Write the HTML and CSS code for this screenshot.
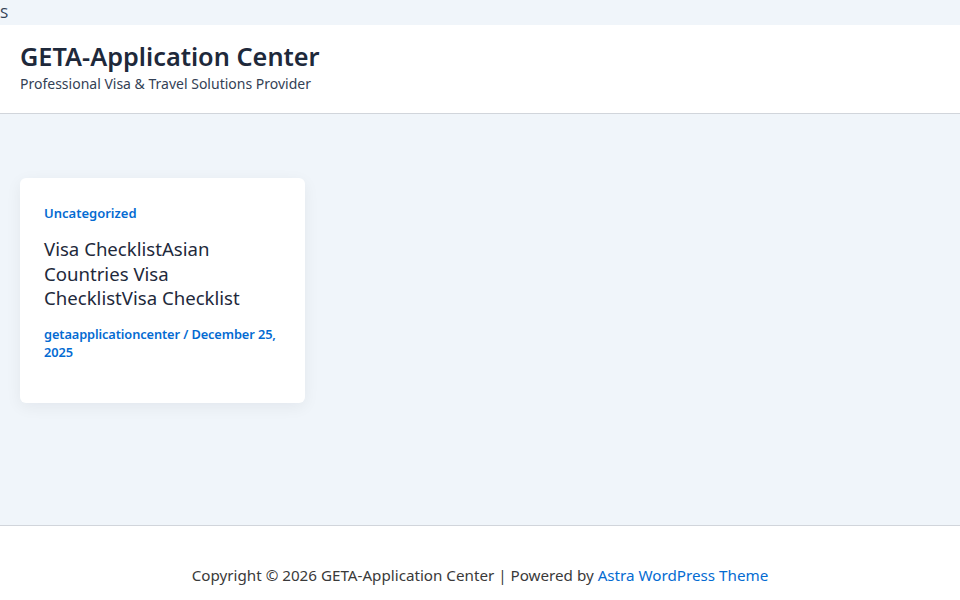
FILE: index.html
```html
<!DOCTYPE html>
<html lang="en">
<head>
<meta charset="utf-8">
<title>GETA-Application Center</title>
<link rel="stylesheet" href="styles.css">
</head>
<body>
<div class="skip">S</div>
<header class="site-header">
  <div class="site-title">GETA-Application Center</div>
  <div class="site-desc">Professional Visa &amp; Travel Solutions Provider</div>
</header>
<main class="content">
  <article class="card">
    <a class="cat" href="#">Uncategorized</a>
    <h2 class="post-title">Visa ChecklistAsian Countries Visa ChecklistVisa Checklist</h2>
    <div class="meta">getaapplicationcenter / December 25, 2025</div>
  </article>
</main>
<footer class="site-footer">
  <p>Copyright © 2026 GETA-Application Center | Powered by <a href="#">Astra WordPress Theme</a></p>
</footer>
</body>
</html>
```
FILE: styles.css
```css
* { box-sizing: border-box; }
html, body { margin: 0; padding: 0; }
body {
  background: #f0f5fa;
  font-family: "Noto Sans", sans-serif;
  color: #334155;
  width: 960px;
  height: 600px;
  overflow: hidden;
}
.skip {
  height: 25px;
  font-size: 15px;
  line-height: 25px;
  color: #334155;
  overflow: hidden;
}
.site-header {
  background: #fff;
  border-bottom: 1px solid #d1d5db;
  height: 89px;
  padding: 14px 20px 0;
}
.site-title {
  font-size: 25.3px;
  font-weight: 600;
  color: #1e293b;
  line-height: 35px;
}
.site-desc {
  font-size: 14px;
  line-height: 20px;
  color: #334155;
}
.content {
  height: 411px;
  padding: 64px 20px 0;
}
.card {
  width: 285px;
  height: 225px;
  background: #fff;
  border-radius: 6px;
  box-shadow: 0 4px 16px rgba(15, 23, 42, 0.06);
  padding: 25px 24px;
}
.cat {
  display: block;
  font-size: 13px;
  font-weight: 600;
  color: #046bd2;
  text-decoration: none;
  line-height: 20px;
}
.post-title {
  margin: 14px 0 14px;
  font-size: 18.6px;
  font-weight: 400;
  line-height: 24.5px;
  color: #1e293b;
}
.meta {
  font-size: 12.8px;
  letter-spacing: -0.1px;
  font-weight: 600;
  color: #046bd2;
  line-height: 18px;
}
.site-footer {
  background: #fff;
  border-top: 1px solid #d1d5db;
  height: 75px;
  text-align: center;
}
.site-footer p {
  margin: 0;
  padding-top: 39px;
  font-size: 15.2px;
  line-height: 20px;
  color: #3a3a3a;
}
.site-footer a { color: #046bd2; text-decoration: none; }
```
